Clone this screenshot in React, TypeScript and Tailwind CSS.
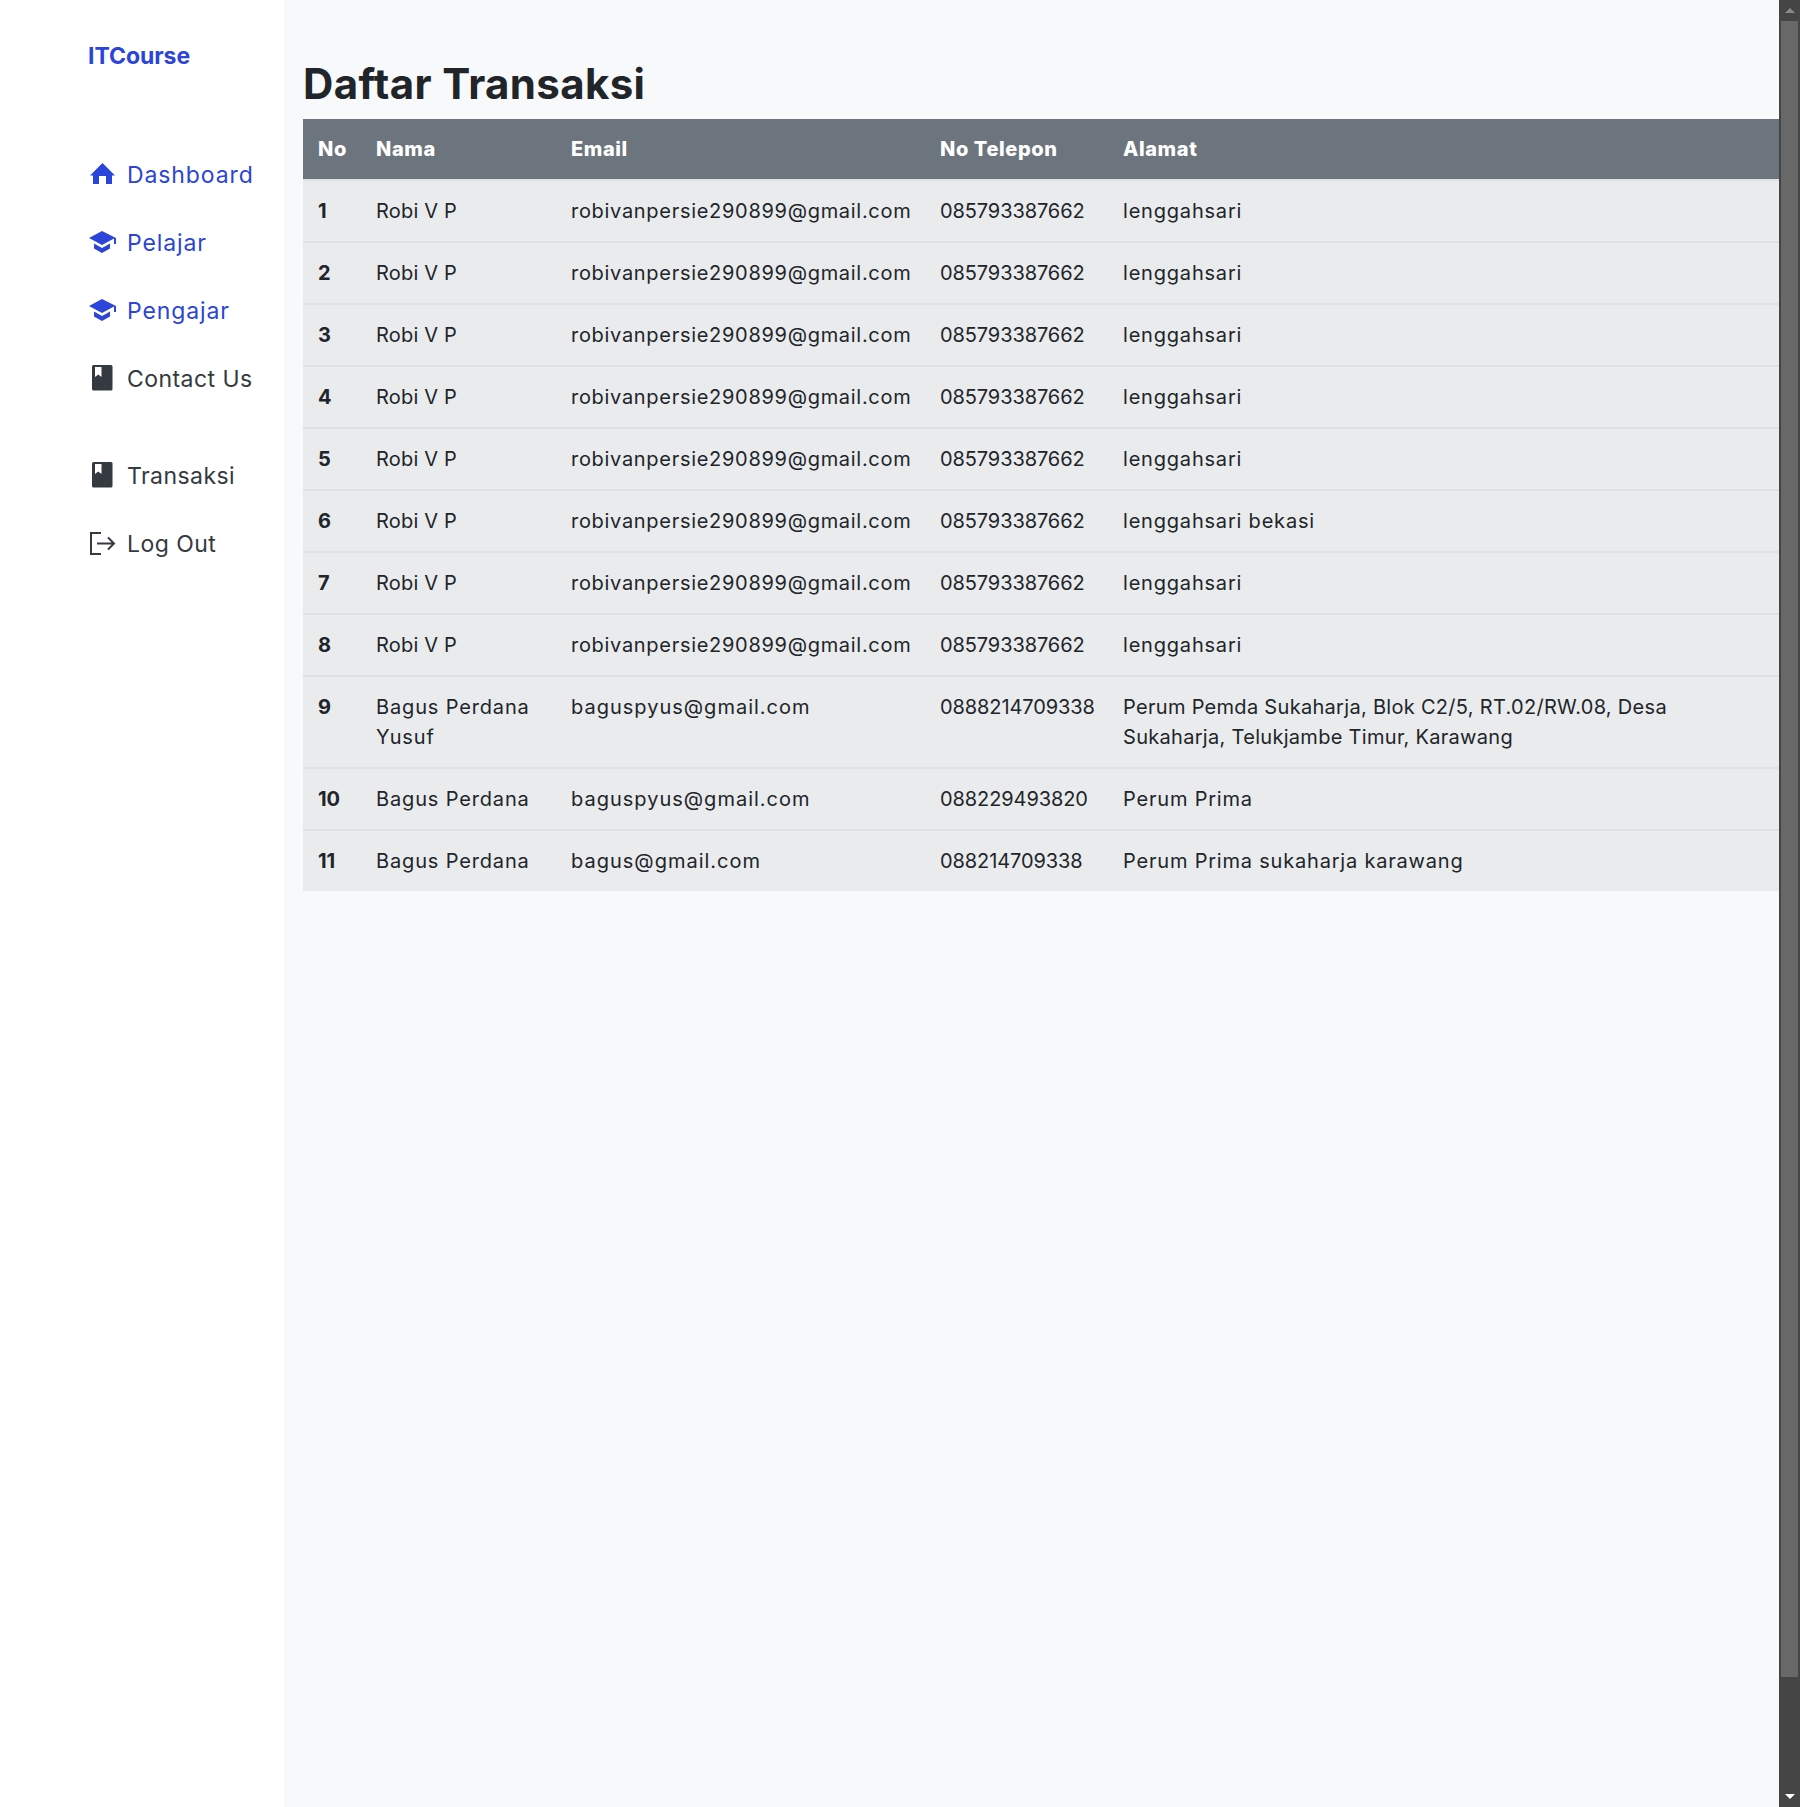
import type { ReactNode } from "react"

const rows = [
  ["1", "Robi V P", "robivanpersie290899@gmail.com", "085793387662", "lenggahsari"],
  ["2", "Robi V P", "robivanpersie290899@gmail.com", "085793387662", "lenggahsari"],
  ["3", "Robi V P", "robivanpersie290899@gmail.com", "085793387662", "lenggahsari"],
  ["4", "Robi V P", "robivanpersie290899@gmail.com", "085793387662", "lenggahsari"],
  ["5", "Robi V P", "robivanpersie290899@gmail.com", "085793387662", "lenggahsari"],
  ["6", "Robi V P", "robivanpersie290899@gmail.com", "085793387662", "lenggahsari bekasi"],
  ["7", "Robi V P", "robivanpersie290899@gmail.com", "085793387662", "lenggahsari"],
  ["8", "Robi V P", "robivanpersie290899@gmail.com", "085793387662", "lenggahsari"],
  ["9", "Bagus Perdana Yusuf", "baguspyus@gmail.com", "0888214709338", "Perum Pemda Sukaharja, Blok C2/5, RT.02/RW.08, Desa Sukaharja, Telukjambe Timur, Karawang"],
  ["10", "Bagus Perdana", "baguspyus@gmail.com", "088229493820", "Perum Prima"],
  ["11", "Bagus Perdana", "bagus@gmail.com", "088214709338", "Perum Prima sukaharja karawang"],
]

function NavItem({ icon, label, active }: { icon: ReactNode; label: string; active?: boolean }) {
  return (
    <a href="#" className={`flex items-center h-[68px] ${active ? "text-[#2b44d9]" : "text-[#343a40]"}`}>
      <span className="w-[39px] flex items-center">{icon}</span>
      <span className={`text-[23px] ${active ? "tracking-[0.9px]" : "tracking-[0.45px]"}`}>{label}</span>
    </a>
  )
}

function HomeIcon() {
  return (
    <svg viewBox="0 0 28 28" className="w-7 h-7 overflow-visible" fill="currentColor">
      <path fillRule="evenodd" d="M14.5 2 27 14.500h-3V23h-6v-8h-7v8H5v-8.500H2z" />
    </svg>
  )
}

function CapIcon() {
  return (
    <svg viewBox="0 0 28 28" className="w-7 h-7 overflow-visible" fill="currentColor">
      <path d="M14 2 1 9l13 7 12-6.500V15h2V9z" />
      <path d="M6 14.500v5L14 24l8-4.500v-5L14 19z" />
    </svg>
  )
}

function BookIcon() {
  return (
    <svg viewBox="0 0 28 28" className="w-7 h-7 overflow-visible">
      <rect x="4" y="0" width="20.500" height="25.500" rx="1.500" fill="currentColor" />
      <path d="M7 2h6.500v10L10.250 9.500 7 12z" fill="#fff" />
    </svg>
  )
}

function LogOutIcon() {
  return (
    <svg viewBox="0 0 28 28" className="w-7 h-7 overflow-visible" fill="none" stroke="currentColor" strokeWidth="2">
      <path d="M13 3H3v21h10" />
      <path d="M9 13.500h17M20 7.500l6 6-6 6" />
    </svg>
  )
}

export default function App() {
  return (
    <div className="flex h-[1807px] bg-[#f8f9fa] text-[#212529] font-['Inter',sans-serif] overflow-hidden">
      <aside className="w-[284px] shrink-0 bg-white pl-[88px]">
        <div className="pt-[40px] text-[23px] font-bold leading-[32px] text-[#2b44d9] tracking-[-0.05px]">ITCourse</div>
        <nav className="mt-[69px]">
          <NavItem active label="Dashboard" icon={<HomeIcon />} />
          <NavItem active label="Pelajar" icon={<CapIcon />} />
          <NavItem active label="Pengajar" icon={<CapIcon />} />
          <NavItem label="Contact Us" icon={<BookIcon />} />
          <div className="h-[29px]" />
          <NavItem label="Transaksi" icon={<BookIcon />} />
          <NavItem label="Log Out" icon={<LogOutIcon />} />
        </nav>
      </aside>

      <main className="flex-1 min-w-0 pl-[19px]">
        <h1 className="pt-[59px] text-[42px] font-bold leading-[50px] mb-[10px] tracking-[0.35px]">Daftar Transaksi</h1>
        <table className="w-full table-fixed border-collapse text-[20px] leading-[30px] bg-[#e9ebed]">
          <colgroup>
            <col className="w-[58px]" />
            <col className="w-[195px]" />
            <col className="w-[369px]" />
            <col className="w-[183px]" />
            <col />
          </colgroup>
          <thead className="bg-[#6c757d] text-white">
            <tr className="h-[61px] border-b-2 border-[#dee2e6]">
              {["No", "Nama", "Email", "No Telepon", "Alamat"].map((h) => (
                <th key={h} className="pl-[15px] pr-0 py-0 text-left font-extrabold tracking-[0.6px] whitespace-nowrap">{h}</th>
              ))}
            </tr>
          </thead>
          <tbody>
            {rows.map((r, i) => (
              <tr key={r[0]} className={i < rows.length - 1 ? "border-b-2 border-[#dee2e6]" : ""}>
                <th className="pl-[15px] pr-0 py-[15px] text-left align-top font-bold">{r[0]}</th>
                <td className={`pl-[15px] pr-[15px] py-[15px] align-top ${i < 8 ? "tracking-[0.2px]" : "tracking-[0.85px]"}`}>{r[1]}</td>
                <td className={`pl-[15px] pr-0 py-[15px] align-top ${i < 8 ? "tracking-[0.7px]" : "tracking-[1px]"}`}>{r[2]}</td>
                <td className="pl-[15px] pr-0 py-[15px] align-top tracking-[-0.1px]">{r[3]}</td>
                <td className={`pl-[15px] pr-[100px] py-[15px] align-top ${i === 8 ? "tracking-[0.3px]" : "tracking-[0.8px]"}`}>{r[4]}</td>
              </tr>
            ))}
          </tbody>
        </table>
      </main>

      <div className="w-[21px] shrink-0 bg-[#454545] flex flex-col items-center">
        <div className="h-[21px] w-full flex items-center justify-center">
          <svg viewBox="0 0 10 5" className="w-[10px] h-[5px] fill-[#8a8a8a]"><path d="M5 0l5 5H0z" /></svg>
        </div>
        <div className="h-[1656px] w-[17px] bg-[#686868]" />
        <div className="flex-1" />
        <div className="h-[21px] w-full flex items-center justify-center">
          <svg viewBox="0 0 10 5" className="w-[10px] h-[5px] fill-white"><path d="M0 0h10L5 5z" /></svg>
        </div>
      </div>
    </div>
  )
}
